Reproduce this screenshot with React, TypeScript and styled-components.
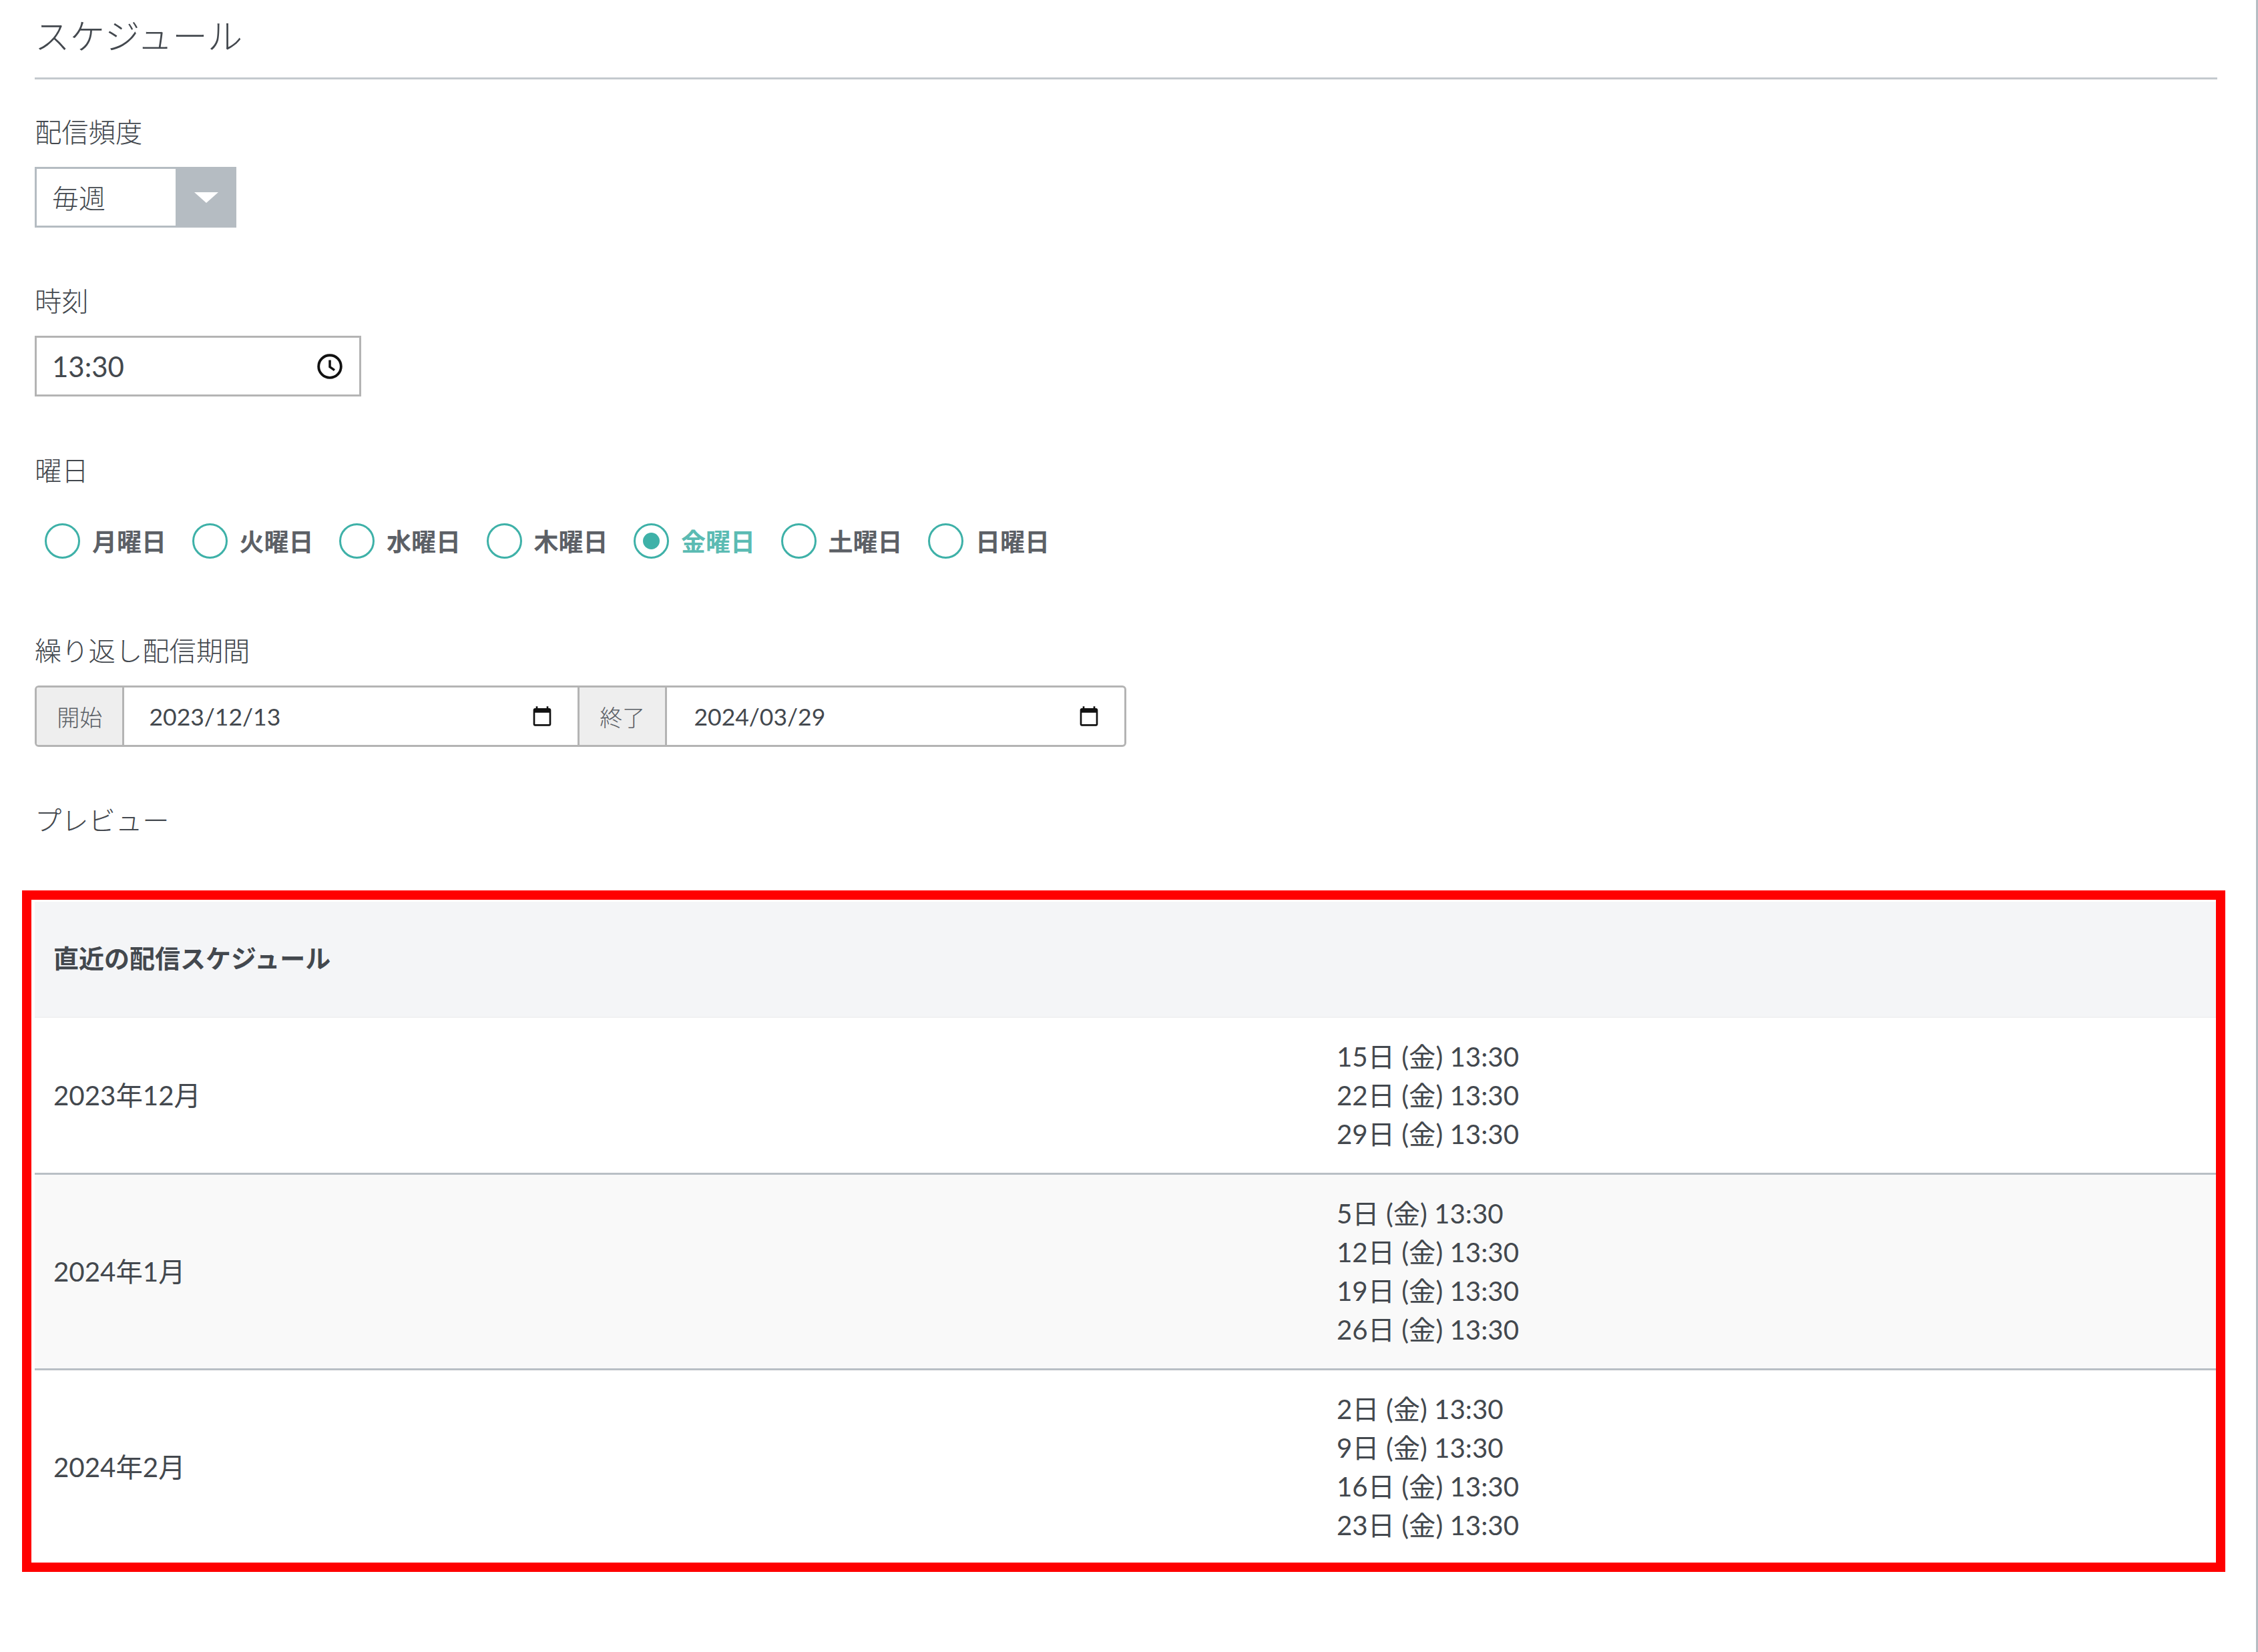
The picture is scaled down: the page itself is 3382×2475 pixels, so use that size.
import React from 'react';
import styled, { createGlobalStyle } from 'styled-components';

const text = '#43484e';
const line = '#b5bcc2';
const teal = '#3eb1a8';

const GlobalStyle = createGlobalStyle`
  html, body {
    margin: 0;
    background: #fff;
  }
  * {
    box-sizing: border-box;
  }
  body {
    font-family: Lato, 'Noto Sans CJK JP', sans-serif;
    color: ${text};
  }
`;

const Page = styled.div`
  width: 3382px;
  height: 2475px;
  padding: 24px 58px 0 52px;
  border-right: 3px solid ${line};
  overflow: hidden;
`;

const Title = styled.h2`
  margin: 0;
  padding-bottom: 32px;
  border-bottom: 3px solid #c4c9ce;
  font-size: 52.5px;
  line-height: 60px;
  font-weight: 300;
`;

const Field = styled.div<{ $top?: number }>`
  margin-top: ${(props) => props.$top ?? 80}px;
`;

const Label = styled.div`
  margin-bottom: 22px;
  font-size: 40.3px;
  line-height: 60px;
  font-weight: 300;
`;

const SelectBox = styled.div`
  display: flex;
  width: 302px;
  height: 91px;
  border: 3px solid ${line};
`;

const SelectValue = styled.div`
  flex: 1;
  padding-left: 23px;
  font-size: 40px;
  line-height: 88px;
  font-weight: 300;
`;

const SelectArrow = styled.div`
  width: 91px;
  margin: -3px -3px -3px 0;
  background: ${line};
  display: flex;
  align-items: center;
  justify-content: center;

  &::after {
    content: '';
    border-left: 18px solid transparent;
    border-right: 18px solid transparent;
    border-top: 16px solid #fff;
  }
`;

const TimeBox = styled.div`
  display: flex;
  align-items: center;
  width: 489px;
  height: 91px;
  padding: 0 23px 0 23px;
  border: 3px solid #b4b4b4;
`;

const BareInput = styled.input<{ $size: number }>`
  flex: 1;
  min-width: 0;
  border: 0;
  outline: 0;
  padding: 0;
  background: transparent;
  font-family: inherit;
  font-size: ${(props) => props.$size}px;
  color: ${text};
`;

const RadioRow = styled.div`
  display: flex;
  margin-top: 49px;
  padding-left: 15px;
`;

const RadioItem = styled.label<{ $checked?: boolean }>`
  display: flex;
  align-items: center;
  width: 220.5px;
  height: 52px;
  gap: 18px;
  font-size: 37px;
  font-weight: 700;
  color: ${(props) => (props.$checked ? '#5bbbb3' : '#5c6066')};
`;

const RadioMark = styled.span<{ $checked?: boolean }>`
  width: 53px;
  height: 53px;
  flex: none;
  border: 3px solid ${teal};
  border-radius: 50%;
  display: flex;
  align-items: center;
  justify-content: center;

  &::after {
    content: '';
    display: ${(props) => (props.$checked ? 'block' : 'none')};
    width: 25px;
    height: 25px;
    border-radius: 50%;
    background: ${teal};
  }
`;

const DateGroup = styled.div`
  display: flex;
  width: 1635px;
  height: 92px;
  border: 3px solid #b4b4b4;
  border-radius: 6px;
  overflow: hidden;
`;

const Addon = styled.div`
  width: 129px;
  background: #eeeeee;
  font-size: 34px;
  font-weight: 300;
  color: #5b6066;
  display: flex;
  align-items: center;
  justify-content: center;
`;

const DateBox = styled.div<{ $width: number; $last?: boolean }>`
  display: flex;
  align-items: center;
  width: ${(props) => props.$width}px;
  padding: 0 37px 0 ${(props) => (props.$last ? 40 : 37)}px;
  border-left: 3px solid #b4b4b4;
  border-right: ${(props) => (props.$last ? '0' : '3px solid #b4b4b4')};
`;

const TableWrap = styled.div`
  position: relative;
  margin-top: 92px;
`;

const RedFrame = styled.div`
  position: absolute;
  left: -19px;
  right: -12px;
  top: -17px;
  bottom: -12px;
  border: 14px solid #ff0000;
  pointer-events: none;
`;

const Table = styled.table`
  width: 100%;
  border-collapse: collapse;
  table-layout: fixed;
  font-size: 40.3px;
`;

const HeadCell = styled.th`
  height: 173px;
  padding: 0 28px 7px;
  background: #f4f5f7;
  border-bottom: 2px solid #f0f1f2;
  font-size: 38px;
  font-weight: 700;
  text-align: left;
`;

const Row = styled.tr<{ $shade?: boolean }>`
  background: ${(props) => (props.$shade ? '#f9f9f9' : '#fff')};

  & + & {
    border-top: 3px solid #b9bfc5;
  }
`;

const Cell = styled.td`
  padding: 29px 28px;
  line-height: 58px;
  font-weight: 400;
`;

const MonthCol = styled.col`
  width: 1922px;
`;

function ClockIcon() {
  return (
    <svg width="42" height="42" viewBox="0 0 24 24" fill="none" stroke="#111" strokeWidth="2.2">
      <circle cx="12" cy="12" r="9.6" />
      <path d="M12 6.5V12.4L16 15.2" strokeWidth="2" />
    </svg>
  );
}

function CalendarIcon() {
  return (
    <svg width="32" height="32" viewBox="0 0 24 24" fill="#111">
      <path d="M20 3h-1V1h-2v2H7V1H5v2H4c-1.1 0-2 .9-2 2v16c0 1.1.9 2 2 2h16c1.1 0 2-.9 2-2V5c0-1.1-.9-2-2-2zm0 18H4V8h16v13z" />
    </svg>
  );
}

const days = ['月曜日', '火曜日', '水曜日', '木曜日', '金曜日', '土曜日', '日曜日'];

const schedule = [
  { month: '2023年12月', dates: ['15日 (金) 13:30', '22日 (金) 13:30', '29日 (金) 13:30'] },
  { month: '2024年1月', dates: ['5日 (金) 13:30', '12日 (金) 13:30', '19日 (金) 13:30', '26日 (金) 13:30'] },
  { month: '2024年2月', dates: ['2日 (金) 13:30', '9日 (金) 13:30', '16日 (金) 13:30', '23日 (金) 13:30'] },
];

export default function App() {
  return (
    <Page>
      <GlobalStyle />
      <Title>スケジュール</Title>

      <Field $top={49}>
        <Label>配信頻度</Label>
        <SelectBox>
          <SelectValue>毎週</SelectValue>
          <SelectArrow />
        </SelectBox>
      </Field>

      <Field>
        <Label>時刻</Label>
        <TimeBox>
          <BareInput $size={42} readOnly value="13:30" />
          <ClockIcon />
        </TimeBox>
      </Field>

      <Field $top={81}>
        <Label>曜日</Label>
        <RadioRow>
          {days.map((day) => (
            <RadioItem key={day} $checked={day === '金曜日'}>
              <RadioMark $checked={day === '金曜日'} />
              {day}
            </RadioItem>
          ))}
        </RadioRow>
      </Field>

      <Field $top={109}>
        <Label>繰り返し配信期間</Label>
        <DateGroup>
          <Addon>開始</Addon>
          <DateBox $width={687}>
            <BareInput $size={35.5} readOnly value="2023/12/13" />
            <CalendarIcon />
          </DateBox>
          <Addon>終了</Addon>
          <DateBox $width={690} $last>
            <BareInput $size={35.5} readOnly value="2024/03/29" />
            <CalendarIcon />
          </DateBox>
        </DateGroup>
      </Field>

      <Field>
        <Label>プレビュー</Label>
      </Field>

      <TableWrap>
        <Table>
          <colgroup>
            <MonthCol />
            <col />
          </colgroup>
          <thead>
            <tr>
              <HeadCell colSpan={2}>直近の配信スケジュール</HeadCell>
            </tr>
          </thead>
          <tbody>
            {schedule.map((row, i) => (
              <Row key={row.month} $shade={i === 1}>
                <Cell>{row.month}</Cell>
                <Cell>
                  {row.dates.map((d) => (
                    <div key={d}>{d}</div>
                  ))}
                </Cell>
              </Row>
            ))}
          </tbody>
        </Table>
        <RedFrame />
      </TableWrap>
    </Page>
  );
}
